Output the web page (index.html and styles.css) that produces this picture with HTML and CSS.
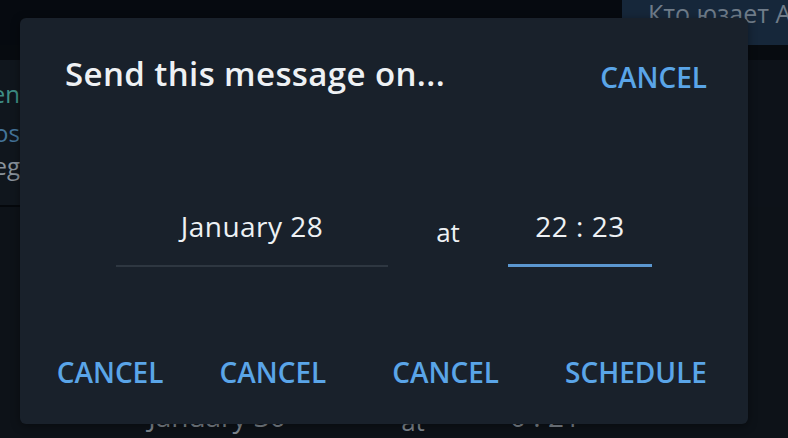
FILE: index.html
```html
<!DOCTYPE html>
<html>
<head>
    <link rel="stylesheet" href="styles.css">
</head>
<body>
    <div class="screen">
        <div class="topbar">
            <div class="topbar-fill"></div>
            <div class="chat-header">Кто юзает Android?</div>
        </div>
        <div class="strip"></div>
        <div class="upper">
            <div class="chat-list">
                <div class="peek peek-name"><span>Steven</span></div>
                <div class="peek peek-media"><span>Photos</span></div>
                <div class="peek peek-text"><span>Teleg</span></div>
            </div>
            <div class="chat-main"></div>
        </div>
        <div class="lower">
            <div class="ghost-row">
                <div class="ghost-date">January 30</div>
                <div class="ghost-at">at</div>
                <div class="ghost-time">0 : 21</div>
            </div>
        </div>
    </div>

    <div class="dialog">
        <div class="dialog-header">
            <h1 class="dialog-title">Send this message on...</h1>
            <a href="#" class="btn btn-top">CANCEL</a>
        </div>

        <div class="picker">
            <div class="field field-date">January 28</div>
            <div class="picker-at">at</div>
            <div class="field field-time">22 : 23</div>
        </div>

        <div class="dialog-buttons">
            <a href="#" class="btn btn-first">CANCEL</a>
            <a href="#" class="btn">CANCEL</a>
            <a href="#" class="btn">CANCEL</a>
            <a href="#" class="btn">SCHEDULE</a>
        </div>
    </div>
</body>
</html>
```

FILE: styles.css
```css
:root {
    --screen: #0c1117;
    --dialog: #19212b;
    --text: #eef1f4;
    --blue: #5aa5e8;
    --line: #2e3741;
    --active: #5b97d0;
    --ghost: #7d858d;
}

* {
    margin: 0;
    padding: 0;
    box-sizing: border-box;
}

body {
    width: 788px;
    height: 438px;
    overflow: hidden;
    position: relative;
    background: var(--screen);
    font-family: 'Open Sans', 'Noto Sans', sans-serif;
    color: var(--text);
}

/* app behind the dim overlay */
.screen {
    height: 100%;
    display: flex;
    flex-direction: column;
}

.topbar {
    height: 45px;
    display: flex;
}

.topbar-fill {
    flex: 1;
    background: #060a10;
}

.chat-header {
    width: 166px;
    background: #16273a;
    color: #6f7c89;
    font-size: 25px;
    line-height: 26px;
    padding-left: 26px;
    white-space: nowrap;
    overflow: hidden;
}

.strip {
    height: 15px;
    background: #070b10;
}

.upper {
    display: flex;
}

.chat-list {
    width: 20px;
    height: 147px;
    background: #10161d;
    border-bottom: 2px solid #05080c;
    padding-top: 19px;
    overflow: hidden;
}

.peek {
    display: flex;
    justify-content: flex-end;
    font-size: 24px;
    line-height: 30px;
    white-space: nowrap;
}

.peek-name { color: #3f8f86; }
.peek-media { color: #44749a; margin-top: 9px; }
.peek-text { color: #8a939c; margin-top: 3px; }

.chat-main {
    flex: 1;
    background: #0d1219;
}

.lower {
    flex: 1;
    display: flex;
    flex-direction: column;
    justify-content: flex-end;
    padding-bottom: 4px;
    background: #0d1218;
}

.ghost-row {
    display: flex;
    align-items: flex-end;
    padding-left: 81px;
    color: var(--ghost);
    font-size: 28px;
    line-height: 36px;
}

.ghost-date {
    width: 272px;
    text-align: center;
}

.ghost-at {
    width: 120px;
    text-align: center;
    font-size: 26px;
    margin-bottom: -5px;
}

.ghost-time {
    width: 144px;
    text-align: center;
}

/* schedule dialog */
.dialog {
    position: absolute;
    left: 20px;
    top: 18px;
    width: 728px;
    height: 406px;
    background: var(--dialog);
    border-radius: 6px;
    box-shadow: 0 2px 10px rgba(0, 0, 0, 0.4);
    padding: 36px 41px 35px 45px;
}

.dialog-header {
    display: flex;
    justify-content: space-between;
    align-items: flex-start;
}

.dialog-title {
    font-size: 33px;
    font-weight: 600;
    line-height: 40px;
    letter-spacing: 0.4px;
    color: var(--text);
}

.btn {
    color: var(--blue);
    text-decoration: none;
    font-size: 28px;
    font-weight: 600;
    line-height: 36px;
}

.btn-top {
    padding-top: 5px;
}

.picker {
    margin-top: 113px;
    margin-left: 51px;
    display: flex;
    align-items: flex-end;
}

.field {
    font-size: 28px;
    line-height: 36px;
    letter-spacing: 0.5px;
    text-align: center;
    padding-bottom: 21px;
    border-bottom: 2px solid var(--line);
}

.field-date {
    width: 272px;
}

.field-time {
    width: 144px;
    padding-bottom: 20px;
    border-bottom: 3px solid var(--active);
}

.picker-at {
    width: 120px;
    text-align: center;
    font-size: 26px;
    line-height: 36px;
    padding-bottom: 17px;
}

.dialog-buttons {
    margin-top: 87px;
    display: flex;
    justify-content: flex-end;
    gap: 66px;
}

.btn-first {
    margin-right: -10px;
}
```
